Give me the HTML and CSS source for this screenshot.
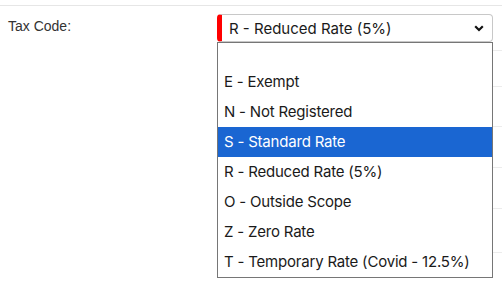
FILE: index.html
```html
<!DOCTYPE html>
<html>

<head>
    <title>Tax Code</title>
    <link rel="stylesheet" href="styles.css">
</head>

<body>
    <div id="form">
        <div class="form-row">
            <label class="form-label">Tax Code:</label>
            <div class="select-wrap">
                <div class="select-box">
                    <span class="select-value">R - Reduced Rate (5%)</span>
                    <svg class="select-arrow" width="10" height="7" viewBox="0 0 10 7">
                        <path d="M1.2 1.3 L5 5 L8.8 1.3" fill="none" stroke="#111" stroke-width="2.2" />
                    </svg>
                </div>
                <ul class="select-list">
                    <li class="option option-empty"></li>
                    <li class="option">E - Exempt</li>
                    <li class="option">N - Not Registered</li>
                    <li class="option selected">S - Standard Rate</li>
                    <li class="option">R - Reduced Rate (5%)</li>
                    <li class="option">O - Outside Scope</li>
                    <li class="option">Z - Zero Rate</li>
                    <li class="option">T - Temporary Rate (Covid - 12.5%)</li>
                </ul>
            </div>
            <div class="side-rows">
                <div class="side-row" style="height: 37px"></div>
                <div class="side-row" style="height: 36px"></div>
                <div class="side-row" style="height: 40px"></div>
                <div class="side-row" style="height: 41px"></div>
                <div class="side-row" style="height: 41px"></div>
                <div class="side-row" style="height: 44px"></div>
            </div>
        </div>
    </div>
</body>

</html>
```

FILE: styles.css
```css
html,
body {
    margin: 0;
    padding: 0;
    min-height: 286px;
    background-color: #fff;
    font-family: "Liberation Sans", Arial, sans-serif;
}

#form {
    padding-top: 5px;
    min-height: 281px;
}

.form-row {
    display: flex;
    border-top: 1px solid #e6e6e6;
    padding-top: 8px;
}

.form-label {
    width: 209px;
    padding-left: 8px;
    padding-top: 4px;
    font-size: 14px;
    color: #333;
}

.select-wrap {
    position: relative;
    width: 276px;
}

.select-box {
    display: flex;
    align-items: center;
    box-sizing: border-box;
    height: 28px;
    border: 1px solid #c8c8c8;
    border-left: 5px solid #f00;
    border-radius: 4px;
    padding: 0 8px 0 7px;
    font-family: Inter, sans-serif;
    font-size: 15px;
    color: #1a1a1a;
}

.select-value {
    flex: 1;
}

.select-list {
    position: absolute;
    top: 28px;
    left: 0;
    width: 276px;
    box-sizing: border-box;
    margin: 0;
    padding: 0;
    list-style: none;
    background-color: #fff;
    border: 1px solid #767676;
    font-family: Inter, sans-serif;
    font-size: 15px;
    letter-spacing: -0.2px;
    color: #1a1a1a;
}

.option {
    height: 30px;
    line-height: 30px;
    padding-left: 6px;
}

.option-empty {
    height: 24px;
}

.option.selected {
    background-color: #1a66d2;
    color: #fff;
}

.side-rows {
    flex: 1;
}

.side-row {
    box-sizing: border-box;
    border-bottom: 1px solid #ececec;
}
```
